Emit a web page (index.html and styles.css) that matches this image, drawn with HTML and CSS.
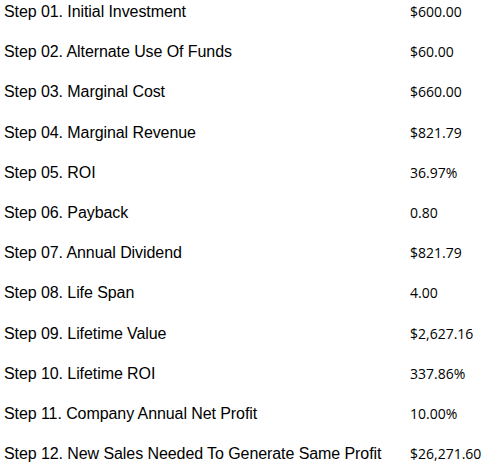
FILE: index.html
```html
<!DOCTYPE html>
<html>
<head>
<meta charset="utf-8">
<link rel="stylesheet" href="styles.css">
</head>
<body>
<div class="steps">
  <div class="row"><span class="label">Step 01. Initial Investment</span><span class="value">$600.00</span></div>
  <div class="row"><span class="label">Step 02. Alternate Use Of Funds</span><span class="value">$60.00</span></div>
  <div class="row"><span class="label">Step 03. Marginal Cost</span><span class="value">$660.00</span></div>
  <div class="row"><span class="label">Step 04. Marginal Revenue</span><span class="value">$821.79</span></div>
  <div class="row"><span class="label">Step 05. ROI</span><span class="value">36.97%</span></div>
  <div class="row"><span class="label">Step 06. Payback</span><span class="value">0.80</span></div>
  <div class="row"><span class="label">Step 07. Annual Dividend</span><span class="value">$821.79</span></div>
  <div class="row"><span class="label">Step 08. Life Span</span><span class="value">4.00</span></div>
  <div class="row"><span class="label">Step 09. Lifetime Value</span><span class="value">$2,627.16</span></div>
  <div class="row"><span class="label">Step 10. Lifetime ROI</span><span class="value">337.86%</span></div>
  <div class="row"><span class="label">Step 11. Company Annual Net Profit</span><span class="value">10.00%</span></div>
  <div class="row"><span class="label">Step 12. New Sales Needed To Generate Same Profit</span><span class="value">$26,271.60</span></div>
</div>
</body>
</html>
```
FILE: styles.css
```css
html, body {
  margin: 0;
  padding: 0;
  background: #fff;
}
.steps {
  display: flex;
  flex-direction: column;
  padding: 3px 0 0 4px;
}
.row {
  display: grid;
  grid-template-columns: 406px auto;
  align-items: baseline;
  height: 40.2px;
  color: #000;
}
.label {
  font-family: "Liberation Sans", Arial, sans-serif;
  font-size: 16px;
  line-height: 18px;
  letter-spacing: -0.08px;
}
.value {
  font-family: "Open Sans", sans-serif;
  font-size: 14px;
  line-height: 18px;
}
```
